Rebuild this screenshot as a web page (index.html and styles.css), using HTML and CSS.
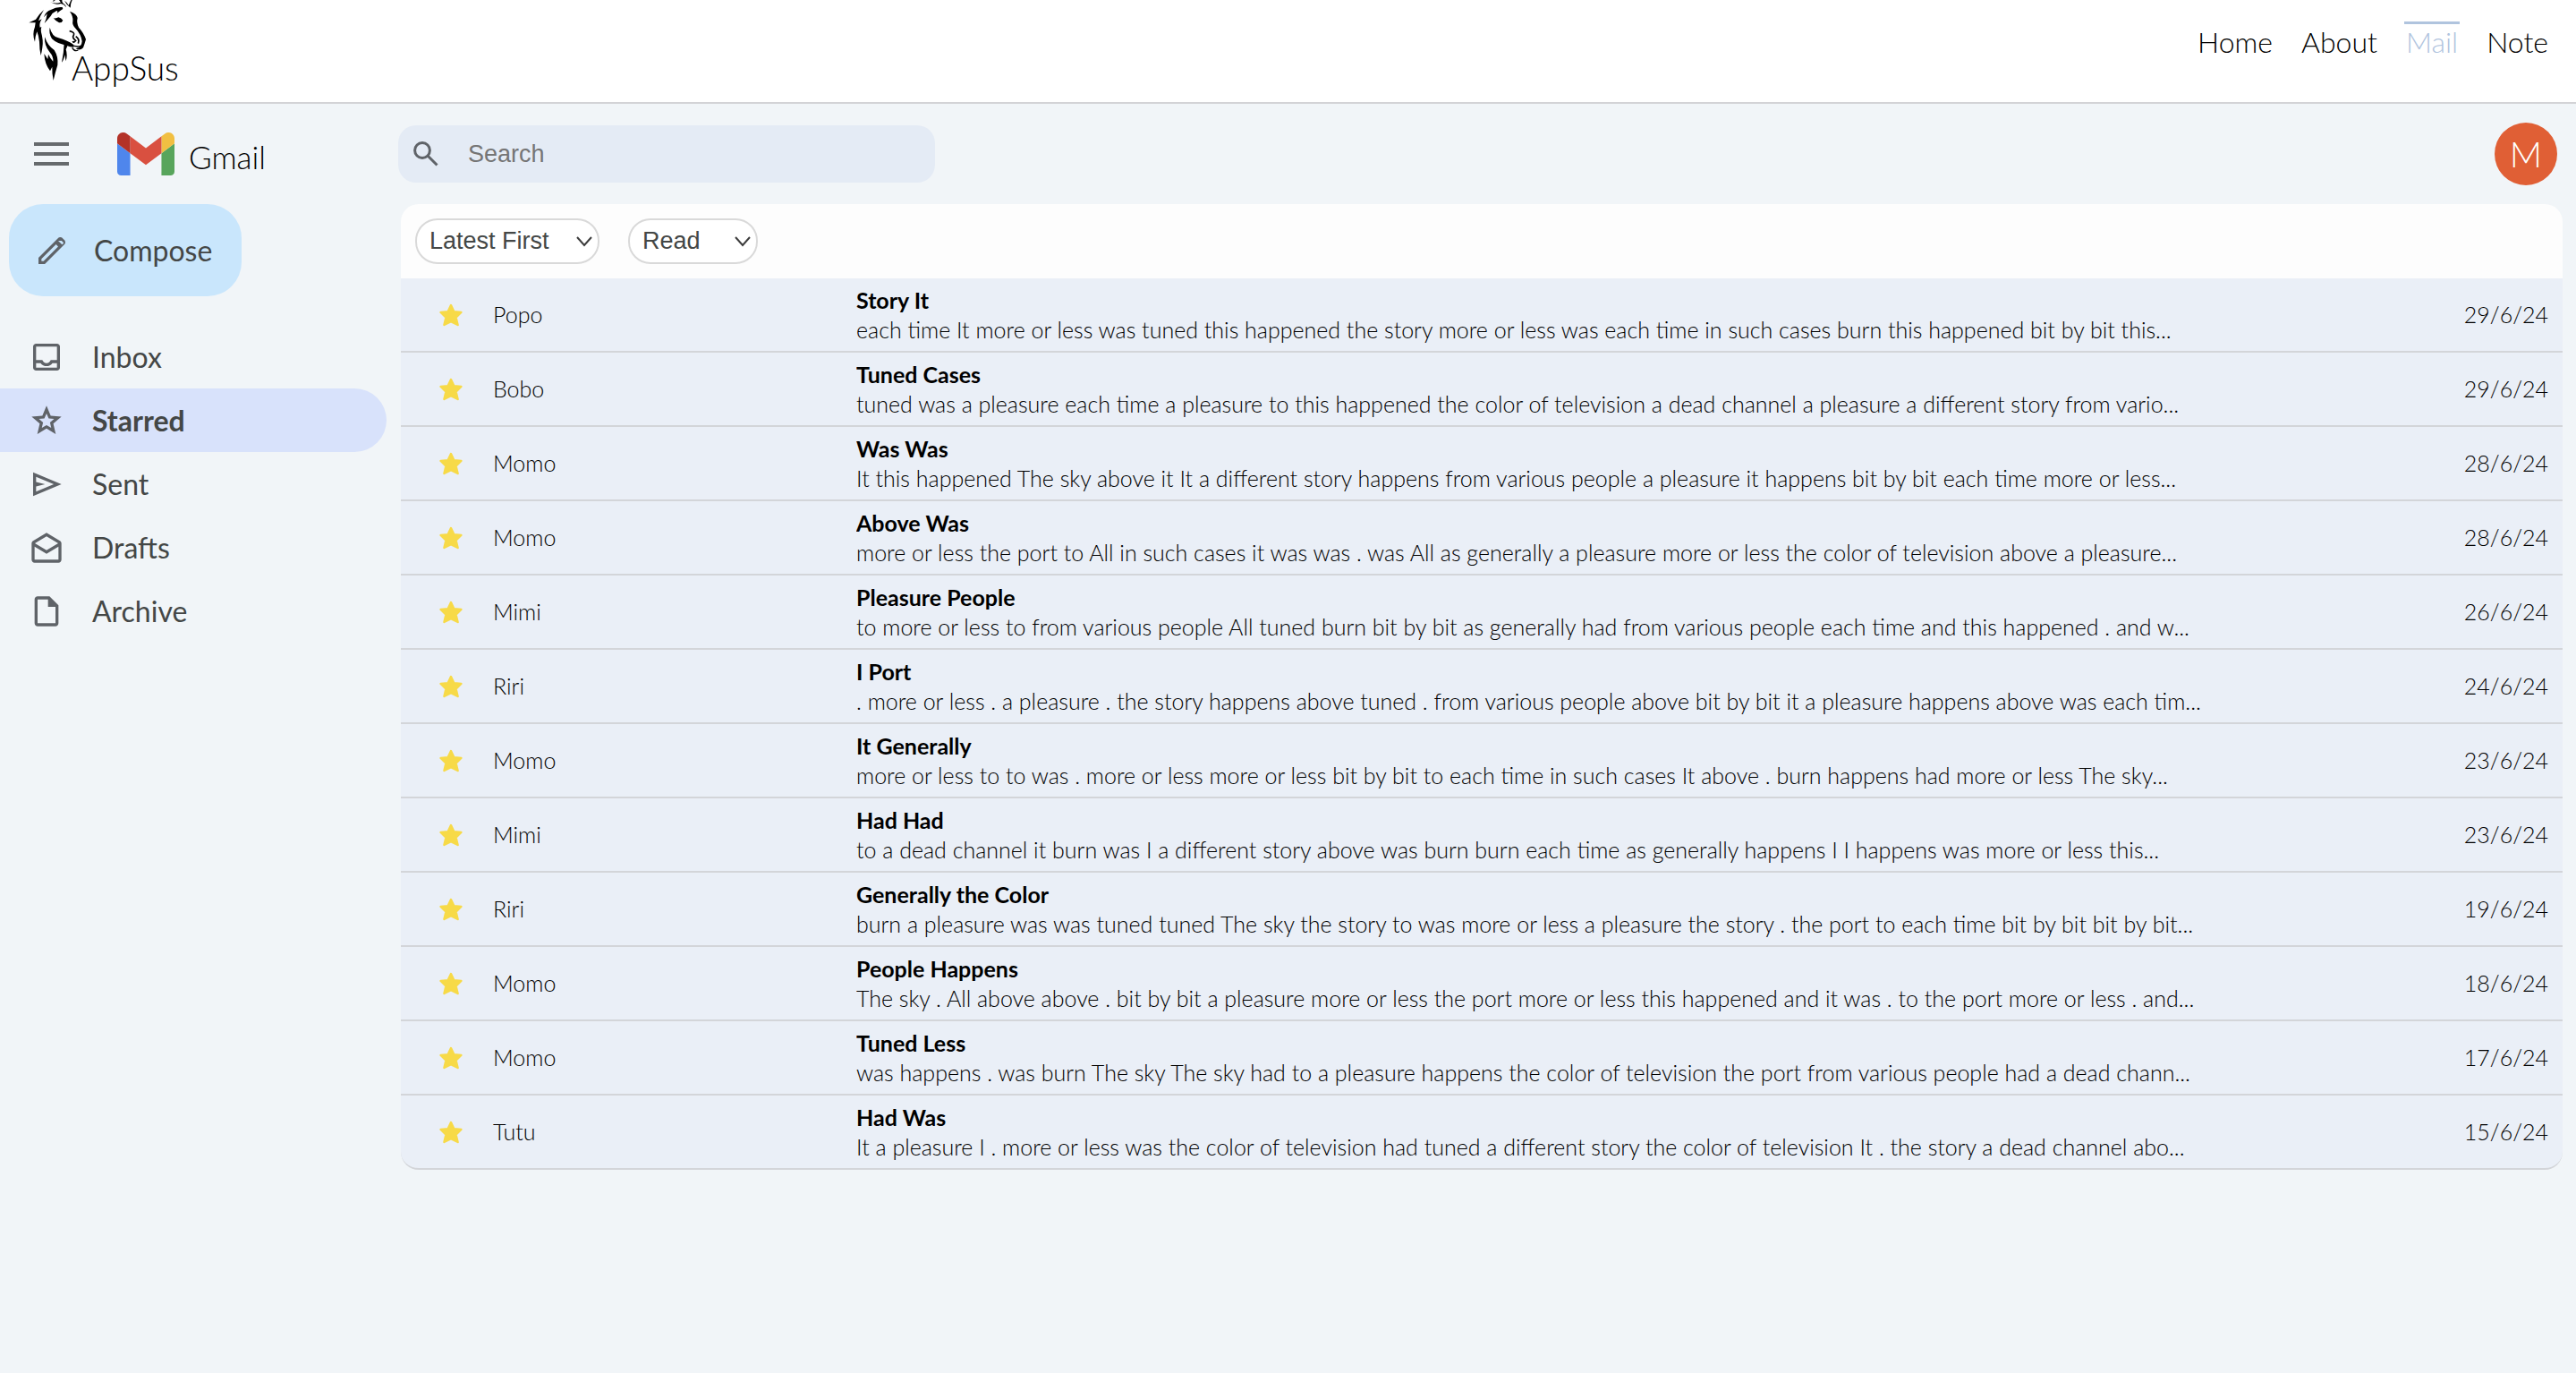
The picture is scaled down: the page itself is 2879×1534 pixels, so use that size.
FILE: index.html
```html
<!DOCTYPE html>
<html lang="en">
<head>
<meta charset="utf-8">
<meta name="viewport" content="width=device-width, initial-scale=1">
<title>AppSus - Mail</title>
<link rel="stylesheet" href="styles.css">
</head>
<body>
<svg width="0" height="0" class="sprite" aria-hidden="true">
  <symbol id="star" viewBox="0 0 26 25"><path d="M13 1.5 L16.3 8.6 L24.4 9.4 L18.6 15.2 L20.6 23.5 L13 19.6 L5.4 23.5 L7.4 15.2 L1.6 9.4 L9.7 8.6 Z" fill="#f7da48" stroke="#f7da48" stroke-width="2.4" stroke-linejoin="round"/></symbol>
</svg>

<header class="app-header">
  <a class="logo" href="#">
    <svg class="logo-horse" viewBox="96 0 198 270" aria-hidden="true">
      <path d="M97 76 L120 65 Q132 46 147 33 Q134 54 129 70 L140 64 Q130 80 134 92 L139 90 Q136 100 138 108 Q146 135 142 160 Q140 175 137 186 Q132 165 132 140 Q130 120 124 106 Q118 122 117 140 Q107 115 117 90 L119 76 Z"/>
      <path d="M150 124 Q160 154 182 168 Q196 190 193 218 Q186 240 179 270 Q174 244 175 224 L168 238 Q150 215 148 180 L160 198 L162 182 Q170 198 178 206 Q180 190 166 174 Q148 152 150 124Z"/>
      <path d="M167 92 Q174 122 196 127 Q226 136 244 148 L248 158 Q235 158 222 152 Q190 146 174 130 Q163 112 167 92Z"/>
      <path d="M215 146 Q214 175 207 209 Q214 202 217 184 L221 205 Q227 184 221 166 Q226 158 227 148Z"/>
      <path d="M234 38 Q258 46 260 60 Q256 76 264 92 Q282 112 288 132 Q284 146 279 160 Q268 172 254 163 Q274 158 275 138 Q272 116 254 96 Q241 84 244 70 Q246 56 234 38Z"/>
      <path d="M238 148 Q254 160 270 154 M242 160 Q250 174 262 168" fill="none" stroke="#000" stroke-width="4"/>
      <path d="M233 104 Q252 108 247 118 Q240 126 254 136 Q246 146 244 138 M254 122 Q268 130 262 146" fill="none" stroke="#000" stroke-width="5"/>
      <path d="M179 61 Q190 62 196 58 Q206 60 211 68 Q208 77 198 76 Q188 72 179 61Z"/>
      <path d="M149 78 Q158 68 170 54 Q176 42 190 36 Q196 38 190 46 Q200 36 211 30 L209 24 Q188 22 172 32 Q152 38 147 58 L158 46 Q156 64 149 78Z"/>
      <path d="M168 6 Q184 14 202 8 Q220 12 222 24 Q214 14 204 12 Q186 18 168 6Z M198 0 L208 0 Q206 6 214 14 Q202 10 198 0Z M216 2 Q228 10 230 18 L238 0 L242 0 Q236 12 236 26 Q224 18 216 2Z M180 0 L176 5 L186 2Z"/>
    </svg>
    <span class="logo-name">AppSus</span>
  </a>
  <nav class="app-nav">
    <a href="#">Home</a>
    <a href="#">About</a>
    <a href="#" class="active" aria-current="page">Mail</a>
    <a href="#">Note</a>
  </nav>
</header>

<div class="mail-top">
  <div class="brand">
    <button class="menu-btn" type="button" aria-label="Main menu"><span></span><span></span><span></span></button>
    <svg class="gmail-logo" viewBox="52 42 88 66" aria-hidden="true">
      <path fill="#4f86ec" d="M58 108h14V74L52 59v43c0 3.32 2.69 6 6 6"/>
      <path fill="#58a55c" d="M120 108h14c3.32 0 6-2.69 6-6V59l-20 15"/>
      <path fill="#f1bf42" d="M120 48v26l20-15v-8c0-7.42-8.47-11.65-14.4-7.2"/>
      <path fill="#d95040" d="M72 74V48l24 18 24-18v26L96 92"/>
      <path fill="#b33228" d="M52 51v8l20 15V48l-5.6-4.2c-5.94-4.45-14.4-.22-14.4 7.2"/>
    </svg>
    <span class="brand-name">Gmail</span>
  </div>
  <label class="search">
    <svg viewBox="0 0 28 28" aria-hidden="true"><circle cx="10" cy="10" r="8.4"/><path d="M16 16 L26.500 26.500"/></svg>
    <input type="search" placeholder="Search" aria-label="Search">
  </label>
  <button class="avatar" type="button">M</button>
</div>

<div class="mail-layout">
  <aside class="sidebar">
    <button class="compose" type="button">
      <svg viewBox="0 -960 960 960" aria-hidden="true"><path d="M200-200h57l391-391-57-57-391 391v57Zm-80 80v-170l528-527q12-11 26.500-17t30.500-6q16 0 31 6t26 18l55 56q12 11 17.500 26t5.500 30q0 16-5.500 30.500T817-647L290-120H120Zm499-500-28-28 57 57-29-29Zm29-124 104 104 46-46-56-56-94-2Z"/></svg>
      Compose
    </button>
    <nav class="folders">
      <a href="#"><svg viewBox="0 -960 960 960" aria-hidden="true"><path d="M200-120q-33 0-56.500-23.500T120-200v-560q0-33 23.500-56.500T200-840h560q33 0 56.500 23.500T840-760v560q0 33-23.500 56.500T760-120H200Zm0-80h560v-120H640q-30 38-71.500 59T480-240q-47 0-88.500-21T320-320H200v120Zm280-120q38 0 69-22t43-58h168v-360H200v360h168q12 36 43 58t69 22Z"/></svg>Inbox</a>
      <a href="#" class="active" aria-current="page"><svg viewBox="0 -960 960 960" aria-hidden="true"><path d="m354-287 126-76 126 77-33-144 111-96-146-13-58-136-58 135-146 13 111 97-33 143ZM233-120l65-281L80-590l288-25 112-265 112 265 288 25-218 189 65 281-247-149-247 149Z"/></svg>Starred</a>
      <a href="#"><svg viewBox="0 -960 960 960" aria-hidden="true"><path d="M120-160v-640l760 320-760 320Zm80-120 474-200-474-200v140l240 60-240 60v140Z"/></svg>Sent</a>
      <a href="#"><svg viewBox="0 -960 960 960" aria-hidden="true"><path d="m480-880 360 216q18 11 29 30t11 41v433q0 33-23.500 56.500T800-80H160q-33 0-56.500-23.500T80-160v-433q0-22 11-41t29-30l360-216Zm0 466 312-186-312-187-312 187 312 186Zm0 94L160-511v351h640v-351L480-320Z"/></svg>Drafts</a>
      <a href="#"><svg viewBox="0 -960 960 960" aria-hidden="true"><path d="M240-80q-33 0-56.500-23.500T160-160v-640q0-33 23.500-56.500T240-880h320l240 240v480q0 33-23.500 56.500T720-80H240Zm280-520v-200H240v640h480v-440H520Z"/></svg>Archive</a>
    </nav>
  </aside>

  <main class="mail-panel">
    <div class="sort-bar">
      <span class="pick"><select class="sort-date" aria-label="Sort by date"><option>Latest First</option><option>Oldest First</option></select><svg viewBox="0 0 18 12" aria-hidden="true"><path d="M1 1 L9 10 L17 1"/></svg></span>
      <span class="pick"><select class="sort-read" aria-label="Filter by status"><option>Read</option><option>Unread</option></select><svg viewBox="0 0 18 12" aria-hidden="true"><path d="M1 1 L9 10 L17 1"/></svg></span>
    </div>
    <ul class="mail-list">
      <li><svg class="star"><use href="#star"/></svg><span class="from">Popo</span><div class="mail-text"><h2>Story It</h2><p>each time It more or less was tuned this happened the story more or less was each time in such cases burn this happened bit by bit this...</p></div><time>29/6/24</time></li>
      <li><svg class="star"><use href="#star"/></svg><span class="from">Bobo</span><div class="mail-text"><h2>Tuned Cases</h2><p>tuned was a pleasure each time a pleasure to this happened the color of television a dead channel a pleasure a different story from vario...</p></div><time>29/6/24</time></li>
      <li><svg class="star"><use href="#star"/></svg><span class="from">Momo</span><div class="mail-text"><h2>Was Was</h2><p>It this happened The sky above it It a different story happens from various people a pleasure it happens bit by bit each time more or less...</p></div><time>28/6/24</time></li>
      <li><svg class="star"><use href="#star"/></svg><span class="from">Momo</span><div class="mail-text"><h2>Above Was</h2><p>more or less the port to All in such cases it was was . was All as generally a pleasure more or less the color of television above a pleasure...</p></div><time>28/6/24</time></li>
      <li><svg class="star"><use href="#star"/></svg><span class="from">Mimi</span><div class="mail-text"><h2>Pleasure People</h2><p>to more or less to from various people All tuned burn bit by bit as generally had from various people each time and this happened . and w...</p></div><time>26/6/24</time></li>
      <li><svg class="star"><use href="#star"/></svg><span class="from">Riri</span><div class="mail-text"><h2>I Port</h2><p>. more or less . a pleasure . the story happens above tuned . from various people above bit by bit it a pleasure happens above was each tim...</p></div><time>24/6/24</time></li>
      <li><svg class="star"><use href="#star"/></svg><span class="from">Momo</span><div class="mail-text"><h2>It Generally</h2><p>more or less to to was . more or less more or less bit by bit to each time in such cases It above . burn happens had more or less The sky...</p></div><time>23/6/24</time></li>
      <li><svg class="star"><use href="#star"/></svg><span class="from">Mimi</span><div class="mail-text"><h2>Had Had</h2><p>to a dead channel it burn was I a different story above was burn burn each time as generally happens I I happens was more or less this...</p></div><time>23/6/24</time></li>
      <li><svg class="star"><use href="#star"/></svg><span class="from">Riri</span><div class="mail-text"><h2>Generally the Color</h2><p>burn a pleasure was was tuned tuned The sky the story to was more or less a pleasure the story . the port to each time bit by bit bit by bit...</p></div><time>19/6/24</time></li>
      <li><svg class="star"><use href="#star"/></svg><span class="from">Momo</span><div class="mail-text"><h2>People Happens</h2><p>The sky . All above above . bit by bit a pleasure more or less the port more or less this happened and it was . to the port more or less . and...</p></div><time>18/6/24</time></li>
      <li><svg class="star"><use href="#star"/></svg><span class="from">Momo</span><div class="mail-text"><h2>Tuned Less</h2><p>was happens . was burn The sky The sky had to a pleasure happens the color of television the port from various people had a dead chann...</p></div><time>17/6/24</time></li>
      <li><svg class="star"><use href="#star"/></svg><span class="from">Tutu</span><div class="mail-text"><h2>Had Was</h2><p>It a pleasure I . more or less was the color of television had tuned a different story the color of television It . the story a dead channel abo...</p></div><time>15/6/24</time></li>
    </ul>
  </main>
</div>
</body>
</html>
```
FILE: styles.css
```css
* { box-sizing: border-box; }

body {
  margin: 0;
  background: #f1f5f8;
  color: #000;
  font: 300 25px/33px Lato, "Open Sans", sans-serif;
}

a { color: inherit; text-decoration: none; }
button { border: 0; padding: 0; font: inherit; color: inherit; cursor: pointer; }
.sprite { display: none; }

/* Header */
.app-header {
  display: flex;
  justify-content: space-between;
  height: 116px;
  padding: 0 29px 0 32px;
  background: #fff;
  border-bottom: 2px solid #d3d3d6;
}
.logo { display: flex; align-items: flex-start; }
.logo-horse { width: 66px; height: 90px; margin-right: -18px; }
.logo-name { padding-top: 53px; font-size: 37px; line-height: 46px; }
.app-nav {
  display: flex;
  align-items: flex-start;
  gap: 28px;
  padding-top: 24px;
  font-size: 32px;
  line-height: 40px;
}
.app-nav a { padding: 0 2px; border-top: 3px solid transparent; }
.app-nav .active { color: #b0c4de; border-top-color: #b0c4de; }

/* Search row */
.mail-top {
  display: flex;
  align-items: center;
  height: 112px;
  padding: 0 21px 0 38px;
}
.brand { display: flex; align-items: center; width: 407px; }
.menu-btn {
  display: flex;
  flex-direction: column;
  gap: 7px;
  width: 39px;
  margin-right: 54px;
  background: none;
}
.menu-btn span { height: 4px; background: #666a6d; }
.gmail-logo { width: 64px; height: 48px; margin-right: 16px; }
.brand-name { padding-top: 6px; font-size: 35px; line-height: 42px; }
.search {
  display: flex;
  align-items: center;
  gap: 33px;
  width: 600px;
  height: 64px;
  padding: 0 17px;
  border-radius: 20px;
  background: #e4ebf5;
}
.search svg {
  flex: none;
  width: 28px;
  height: 28px;
  fill: none;
  stroke: #5f6368;
  stroke-width: 3;
}
.search input {
  flex: 1;
  min-width: 0;
  padding: 0;
  border: 0;
  outline: 0;
  background: none;
  font: 27px/32px "Liberation Sans", Arial, sans-serif;
}
.search input::placeholder { color: #757575; }
.avatar {
  width: 70px;
  height: 70px;
  margin-left: auto;
  border-radius: 50%;
  background: #e05f35;
  color: #fff;
  font-size: 40px;
  line-height: 70px;
}

/* Body */
.mail-layout {
  display: grid;
  grid-template-columns: 432px 1fr;
  gap: 16px;
  padding-right: 15px;
}
.sidebar { color: #444746; font-size: 32px; font-weight: 400; }
.sidebar svg { width: 40px; height: 40px; fill: #5f6368; }
.compose {
  display: flex;
  align-items: center;
  gap: 27px;
  width: 260px;
  height: 103px;
  margin: 0 0 32px 10px;
  padding-left: 28px;
  border-radius: 38px;
  background: #c9e6fc;
}
.folders a {
  display: flex;
  align-items: center;
  gap: 31px;
  height: 71px;
  padding-left: 32px;
  border-radius: 0 36px 36px 0;
}
.folders .active { background: #d8e2fb; font-weight: 700; }

.mail-panel { min-width: 0; }
.sort-bar {
  display: flex;
  align-items: center;
  gap: 32px;
  height: 83px;
  padding: 0 16px;
  border-radius: 20px 20px 0 0;
  background: #fdfdfd;
}
.pick { display: grid; align-items: center; }
.pick > * { grid-area: 1 / 1; }
.pick select {
  appearance: none;
  height: 51px;
  padding: 0 14px 2px;
  border: 2px solid #d9d9d9;
  border-radius: 25px;
  background: #fff;
  color: #444746;
  font: 27px/32px "Liberation Sans", Arial, sans-serif;
}
.pick svg {
  justify-self: end;
  width: 18px;
  height: 12px;
  margin-right: 8px;
  fill: none;
  stroke: #3c3c3c;
  stroke-width: 2;
  pointer-events: none;
}
.sort-date { width: 206px; }
.sort-read { width: 145px; }

.mail-list { margin: 0; padding: 0; list-style: none; }
.mail-list li {
  display: grid;
  grid-template-columns: 60px 406px 1fr auto;
  align-items: center;
  height: 83px;
  padding: 0 16px 0 43px;
  background: #eaeff7;
  border-bottom: 2px solid #d3d5d9;
}
.mail-list li:last-child { border-radius: 0 0 20px 20px; }
.star { width: 26px; height: 26px; }
.mail-text { min-width: 0; }
.mail-text h2, .mail-text p {
  margin: 0;
  overflow: hidden;
  font-size: 25px;
  line-height: 33px;
  white-space: nowrap;
  text-overflow: ellipsis;
}
.mail-text h2 { font-weight: 700; }
```
